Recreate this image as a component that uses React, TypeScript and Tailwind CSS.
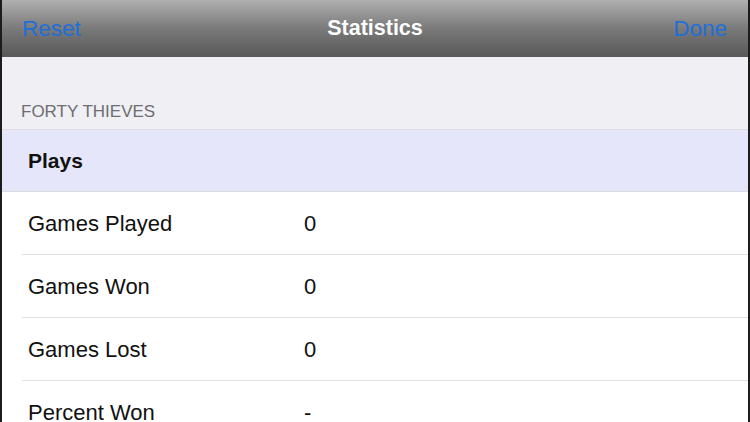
import React from 'react';

const rows = [
  { label: 'Games Played', value: '0' },
  { label: 'Games Won', value: '0' },
  { label: 'Games Lost', value: '0' },
  { label: 'Percent Won', value: '-' },
];

const App: React.FC = () => {
  return (
    <div
      className="w-[750px] h-[422px] overflow-hidden bg-[#efeff4] border-l-2 border-r-2 border-[#1c1c1c] flex flex-col"
      style={{ fontFamily: '"Liberation Sans", Arial, sans-serif' }}
    >
      {/* Nav bar */}
      <div className="h-[57px] shrink-0 flex items-center justify-between pl-5 pr-[21px] bg-gradient-to-b from-[#b0b0b0] via-[#7a7a7a] to-[#585858] relative">
        <span className="text-[22.5px] text-[#1e6fd9]">Reset</span>
        <span className="absolute left-0 right-0 text-center text-[21.5px] text-white font-bold">Statistics</span>
        <span className="text-[22.5px] text-[#1e6fd9]">Done</span>
      </div>

      {/* Section header */}
      <div className="h-[73px] shrink-0 flex items-end pb-[5px] pl-[19px] border-b border-[#dcdce2]">
        <span className="text-[17px] text-[#6d6d72]">FORTY THIEVES</span>
      </div>

      {/* Plays header row */}
      <div className="h-[62px] shrink-0 flex items-center pl-[26px] bg-[#e6e6fa] border-b border-[#dcdce6]">
        <span className="text-[21px] font-bold text-[#111]">Plays</span>
      </div>

      {/* Stats */}
      <div className="bg-white flex-1">
        {rows.map((row) => (
          <div key={row.label} className="pl-[20px]">
            <div className="h-[63px] flex items-center border-b border-[#e0e0e0] pl-[6px]">
              <span className="w-[276px] text-[22px] text-[#111]">{row.label}</span>
              <span className="text-[22px] text-[#111]">{row.value}</span>
            </div>
          </div>
        ))}
      </div>
    </div>
  );
};

export default App;
